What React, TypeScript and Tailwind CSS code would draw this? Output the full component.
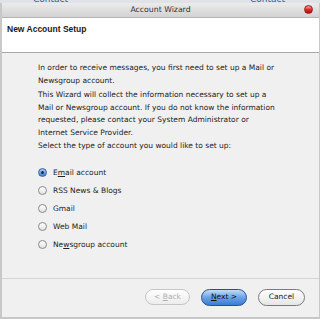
import React, { useState } from "react";

const accounts = [
  { id: "email", label: "Email account", key: "m" },
  { id: "rss", label: "RSS News & Blogs" },
  { id: "gmail", label: "Gmail" },
  { id: "web", label: "Web Mail" },
  { id: "news", label: "Newsgroup account", key: "w" },
];

function Label({ text, k }: { text: string; k?: string }) {
  if (!k) return <span>{text}</span>;
  const i = text.indexOf(k);
  return (
    <span>
      {text.slice(0, i)}
      <span className="underline underline-offset-1">{text[i]}</span>
      {text.slice(i + 1)}
    </span>
  );
}

const App: React.FC = () => {
  const [selected, setSelected] = useState("email");

  return (
    <div
      className="w-[320px] h-[319px] overflow-hidden bg-[#f0f0f0] flex flex-col text-[#222]"
      style={{ fontFamily: '"DejaVu Sans", "Liberation Sans", sans-serif' }}
    >
      {/* window behind, peeking out */}
      <div className="h-[3px] bg-[#dfe3e8] relative overflow-hidden shrink-0">
        <span className="absolute left-[33px] -top-[7px] text-[9px] text-[#3a5a8a]">Contact</span>
        <span className="absolute left-[250px] -top-[7px] text-[9px] text-[#3a5a8a]">Contact</span>
      </div>

      <div className="flex-1 flex flex-col border-l-2 border-r border-b-2 border-[#c8c8c8]">
        {/* title bar */}
        <div className="h-[15px] shrink-0 bg-gradient-to-b from-[#ececec] to-[#d2d2d2] border-b border-[#b4b4b4] flex items-center justify-center relative">
          <span className="text-[7.75px] leading-none text-[#333]">Account Wizard</span>
          <span className="absolute right-[6px] top-[2px] w-[9px] h-[9px] rounded-full bg-gradient-to-b from-[#f8a0a0] via-[#e02828] to-[#b01010] border border-[#9a1a1a]"></span>
        </div>

        {/* header */}
        <div className="h-[35px] shrink-0 bg-white border-b border-[#a8a8a8] px-[5px] pt-[5px]">
          <div
            className="text-[8.5px] leading-[12px] font-bold text-[#1a1a1a]"
            style={{ fontFamily: '"Liberation Sans", Arial, sans-serif' }}
          >
            New Account Setup
          </div>
        </div>

        {/* body */}
        <div className="flex-1 flex flex-col pl-[36px] pr-[40px] pt-[9px] text-[7.5px] leading-[12.5px]">
          <p>In order to receive messages, you first need to set up a Mail or Newsgroup account.</p>
          <p className="mt-[2px]">
            This Wizard will collect the information necessary to set up a Mail or Newsgroup account. If you do not know
            the information requested, please contact your System Administrator or Internet Service Provider.
          </p>
          <p className="mt-[1px]">Select the type of account you would like to set up:</p>

          <div className="flex flex-col gap-[5.5px] mt-[14px]">
            {accounts.map((a) => (
              <label key={a.id} className="flex items-center gap-[6px] h-[12.5px] cursor-pointer" onClick={() => setSelected(a.id)}>
                <span
                  className={
                    selected === a.id
                      ? "w-[9px] h-[9px] rounded-full bg-gradient-to-b from-[#a9c8f0] to-[#3f7fd6] border border-[#3a62a0] flex items-center justify-center"
                      : "w-[9px] h-[9px] rounded-full bg-gradient-to-b from-white to-[#e2e2e2] border border-[#8a8a8a]"
                  }
                >
                  {selected === a.id && <span className="w-[3px] h-[3px] rounded-full bg-[#1c2c4a]"></span>}
                </span>
                <Label text={a.label} k={a.key} />
              </label>
            ))}
          </div>
        </div>

        {/* footer */}
        <div className="h-[39px] shrink-0 border-t border-[#d4d4d4] flex items-center justify-end gap-[11px] pr-[14px] pb-[2px]">
          <button className="w-[45px] h-[16px] rounded-full border border-[#c6c6c6] bg-gradient-to-b from-white to-[#ececec] text-[7.5px] text-[#b0b0b0]">
            &lt; <span className="underline">B</span>ack
          </button>
          <button className="w-[46px] h-[17px] rounded-full border border-[#2a4f8f] bg-gradient-to-b from-[#c4dcf8] via-[#6aa2e6] to-[#3b7bd6] text-[7.5px] text-[#111]">
            <span className="underline">N</span>ext &gt;
          </button>
          <button className="w-[47px] h-[17px] rounded-full border border-[#7a7a7a] bg-gradient-to-b from-white to-[#e6e6e6] text-[7.5px] text-[#222]">
            Cancel
          </button>
        </div>
      </div>
    </div>
  );
};

export default App;
